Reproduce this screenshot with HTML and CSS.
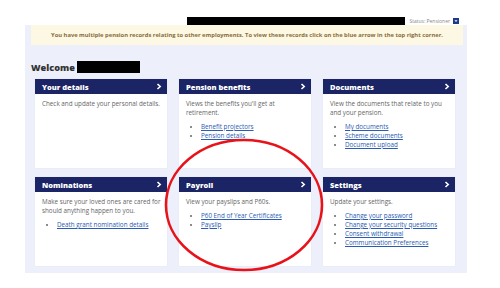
FILE: index.html
```html
<!DOCTYPE html>
<html lang="en">
<head>
  <meta charset="UTF-8" />
  <title>Member home</title>
  <link rel="stylesheet" href="styles.css">
</head>
<body>
  <div class="page">

    <!-- Top bar -->
    <div class="topbar">
      <span class="redact name-bar"></span>
      <span class="status">Status: Pensioner</span>
      <span class="status-btn">
        <svg width="6" height="6" viewBox="0 0 6 6"><polygon points="1.5,2.2 4.5,2.2 3,3.9" fill="#fff"/></svg>
      </span>
    </div>

    <div class="panel">
      <div class="notice">You have multiple pension records relating to other employments. To view these records click on the blue arrow in the top right corner.</div>

      <h1 class="welcome">Welcome <span class="redact welcome-bar"></span></h1>

      <div class="cards">
        <div class="card">
          <div class="card-head">Your details <svg class="chev" width="6" height="7" viewBox="0 0 6 7"><polyline points="1.5,1 4.2,3.5 1.5,6" fill="none" stroke="#fff" stroke-width="1.6"/></svg></div>
          <div class="card-body">
            <p>Check and update your personal details.</p>
          </div>
        </div>

        <div class="card">
          <div class="card-head">Pension benefits <svg class="chev" width="6" height="7" viewBox="0 0 6 7"><polyline points="1.5,1 4.2,3.5 1.5,6" fill="none" stroke="#fff" stroke-width="1.6"/></svg></div>
          <div class="card-body">
            <p>Views the benefits you'll get at<br>retirement.</p>
            <ul>
              <li><a href="#">Benefit projectors</a></li>
              <li><a href="#">Pension details</a></li>
            </ul>
          </div>
        </div>

        <div class="card">
          <div class="card-head">Documents <svg class="chev" width="6" height="7" viewBox="0 0 6 7"><polyline points="1.5,1 4.2,3.5 1.5,6" fill="none" stroke="#fff" stroke-width="1.6"/></svg></div>
          <div class="card-body">
            <p>View the documents that relate to you<br>and your pension.</p>
            <ul>
              <li><a href="#">My documents</a></li>
              <li><a href="#">Scheme documents</a></li>
              <li><a href="#">Document upload</a></li>
            </ul>
          </div>
        </div>

        <div class="card">
          <div class="card-head">Nominations <svg class="chev" width="6" height="7" viewBox="0 0 6 7"><polyline points="1.5,1 4.2,3.5 1.5,6" fill="none" stroke="#fff" stroke-width="1.6"/></svg></div>
          <div class="card-body">
            <p>Make sure your loved ones are cared for<br>should anything happen to you.</p>
            <ul>
              <li><a href="#">Death grant nomination details</a></li>
            </ul>
          </div>
        </div>

        <div class="card">
          <div class="card-head">Payroll <svg class="chev" width="6" height="7" viewBox="0 0 6 7"><polyline points="1.5,1 4.2,3.5 1.5,6" fill="none" stroke="#fff" stroke-width="1.6"/></svg></div>
          <div class="card-body">
            <p>View your payslips and P60s.</p>
            <ul>
              <li><a href="#">P60 End of Year Certificates</a></li>
              <li><a href="#">Payslip</a></li>
            </ul>
          </div>
        </div>

        <div class="card">
          <div class="card-head">Settings <svg class="chev" width="6" height="7" viewBox="0 0 6 7"><polyline points="1.5,1 4.2,3.5 1.5,6" fill="none" stroke="#fff" stroke-width="1.6"/></svg></div>
          <div class="card-body">
            <p>Update your settings.</p>
            <ul>
              <li><a href="#">Change your password</a></li>
              <li><a href="#">Change your security questions</a></li>
              <li><a href="#">Consent withdrawal</a></li>
              <li><a href="#">Communication Preferences</a></li>
            </ul>
          </div>
        </div>
      </div>
    </div>
  </div>

  <!-- Red highlight drawn over the page -->
  <svg class="highlight" width="170" height="140" viewBox="0 0 170 140">
    <ellipse cx="85" cy="70" rx="78" ry="65" fill="none" stroke="#e8121a" stroke-width="2.6"/>
  </svg>
</body>
</html>
```

FILE: styles.css
```css
body {
  margin: 0;
  background: #fff;
  font-family: 'Open Sans', 'Liberation Sans', sans-serif;
  color: #666;
}

.page {
  width: 442px;
  margin-left: 25px;
  padding-top: 17px;
}

.topbar {
  display: flex;
  justify-content: flex-end;
  align-items: center;
  height: 8px;
  padding-right: 8px;
}

.redact {
  display: inline-block;
  background: #000;
}

.name-bar {
  width: 218px;
  height: 8px;
  margin-right: 4px;
}

.status {
  font-size: 5px;
  color: #888;
  margin-right: 3px;
}

.status-btn {
  width: 6px;
  height: 6px;
  background: #1f3a8a;
  display: flex;
}

.panel {
  background: #edf0fb;
  padding-bottom: 7px;
}

.notice {
  margin: 0 4px 0 6px;
  height: 20px;
  background: #fcf8e3;
  color: #8a6d3b;
  font-size: 5.8px;
  font-weight: 700;
  display: flex;
  align-items: center;
  justify-content: center;
}

.welcome {
  margin: 16px 0 6px;
  padding-left: 6px;
  height: 12px;
  display: flex;
  align-items: center;
  gap: 2px;
  font-size: 9.2px;
  font-weight: 800;
  color: #333;
}

.welcome-bar {
  width: 63px;
  height: 12px;
}

.cards {
  margin: 0 12px 0 10px;
  display: grid;
  grid-template-columns: repeat(3, 1fr);
  column-gap: 12px;
  row-gap: 9px;
}

.card {
  background: #fff;
  height: 89px;
  box-shadow: 0 0 1px rgba(0, 0, 0, 0.08);
}

.card-head {
  height: 15px;
  background: #1b2565;
  color: #fff;
  font-size: 7.5px;
  font-weight: 800;
  display: flex;
  align-items: center;
  justify-content: space-between;
  padding: 0 5px 0 7px;
}

.card-body {
  padding: 5px 0 0 7px;
  font-size: 6.3px;
  line-height: 9px;
  white-space: nowrap;
}

.card-body p {
  margin: 0;
}

.card-body ul {
  margin: 5px 0 0;
  padding-left: 15px;
}

.card-body a {
  color: #2c5bb3;
}

.highlight {
  position: absolute;
  left: 159px;
  top: 135px;
}
```
